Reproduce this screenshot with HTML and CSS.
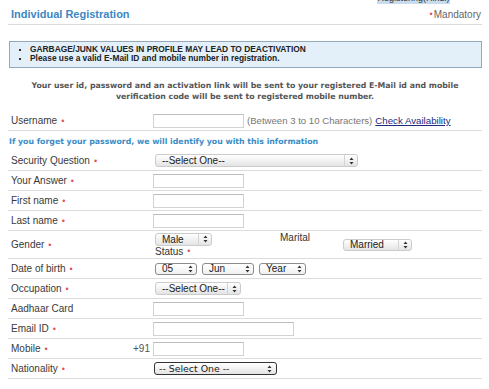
FILE: index.html
```html
<!DOCTYPE html>
<html>
<head>
<meta charset="utf-8">
<link rel="stylesheet" href="styles.css">
</head>
<body>
<div class="page">
  <div class="tabbar"><div class="tab"><span>Registering(Hindi)</span></div></div>
  <div class="head">
    <h1 class="title">Individual Registration</h1>
    <div class="mand"><span class="req">•</span>Mandatory</div>
  </div>
  <div class="notice">
    <ul>
      <li>GARBAGE/JUNK VALUES IN PROFILE MAY LEAD TO DEACTIVATION</li>
      <li>Please use a valid E-Mail ID and mobile number in registration.</li>
    </ul>
  </div>
  <p class="intro">Your user id, password and an activation link will be sent to your registered E-Mail id and mobile<br>verification code will be sent to registered mobile number.</p>

  <div class="form">
    <div class="row">
      <div class="lbl"><span>Username<span class="req">•</span></span></div>
      <input class="txt" type="text">
      <span class="hint">(Between 3 to 10 Characters)</span>
      <a class="check" href="#">Check Availability</a>
    </div>
    <div class="row info">If you forget your password, we will identify you with this information</div>
    <div class="row">
      <div class="lbl"><span>Security Question<span class="req">•</span></span></div>
      <div class="sel w-sec"><span class="val">--Select One--</span><span class="arr"><svg width="5" height="8" viewBox="0 0 5 8"><path d="M2.5 0.5L4.5 3H0.5Z M0.5 5H4.5L2.5 7.5Z" fill="#333"/></svg></span></div>
    </div>
    <div class="row">
      <div class="lbl"><span>Your Answer<span class="req">•</span></span></div>
      <input class="txt" type="text">
    </div>
    <div class="row">
      <div class="lbl"><span>First name<span class="req">•</span></span></div>
      <input class="txt" type="text">
    </div>
    <div class="row">
      <div class="lbl"><span>Last name<span class="req">•</span></span></div>
      <input class="txt" type="text">
    </div>
    <div class="row gender">
      <div class="lbl"><span>Gender<span class="req">•</span></span></div>
      <div class="gcell">
        <div class="gline">
          <div class="sel w-male"><span class="val">Male</span><span class="arr"><svg width="5" height="8" viewBox="0 0 5 8"><path d="M2.5 0.5L4.5 3H0.5Z M0.5 5H4.5L2.5 7.5Z" fill="#333"/></svg></span></div>
          <span class="marital">Marital</span>
        </div>
        <div class="status">Status<span class="req">•</span></div>
      </div>
      <div class="sel w-mar"><span class="val">Married</span><span class="arr"><svg width="5" height="8" viewBox="0 0 5 8"><path d="M2.5 0.5L4.5 3H0.5Z M0.5 5H4.5L2.5 7.5Z" fill="#333"/></svg></span></div>
    </div>
    <div class="row">
      <div class="lbl"><span>Date of birth<span class="req">•</span></span></div>
      <div class="dob">
        <div class="sel dsel w-day"><span class="val">05</span><span class="arr"><svg width="5" height="8" viewBox="0 0 5 8"><path d="M2.5 0.5L4.5 3H0.5Z M0.5 5H4.5L2.5 7.5Z" fill="#333"/></svg></span></div>
        <div class="sel dsel w-mon"><span class="val">Jun</span><span class="arr"><svg width="5" height="8" viewBox="0 0 5 8"><path d="M2.5 0.5L4.5 3H0.5Z M0.5 5H4.5L2.5 7.5Z" fill="#333"/></svg></span></div>
        <div class="sel dsel w-year"><span class="val">Year</span><span class="arr"><svg width="5" height="8" viewBox="0 0 5 8"><path d="M2.5 0.5L4.5 3H0.5Z M0.5 5H4.5L2.5 7.5Z" fill="#333"/></svg></span></div>
      </div>
    </div>
    <div class="row">
      <div class="lbl"><span>Occupation<span class="req">•</span></span></div>
      <div class="sel w-occ"><span class="val">--Select One--</span><span class="arr"><svg width="5" height="8" viewBox="0 0 5 8"><path d="M2.5 0.5L4.5 3H0.5Z M0.5 5H4.5L2.5 7.5Z" fill="#333"/></svg></span></div>
    </div>
    <div class="row">
      <div class="lbl"><span>Aadhaar Card</span></div>
      <input class="txt" type="text">
    </div>
    <div class="row">
      <div class="lbl"><span>Email ID<span class="req">•</span></span></div>
      <input class="txt wide" type="text">
    </div>
    <div class="row">
      <div class="lbl"><span>Mobile<span class="req">•</span></span><span class="cc">+91</span></div>
      <input class="txt" type="text">
    </div>
    <div class="row">
      <div class="lbl"><span>Nationality<span class="req">•</span></span></div>
      <div class="sel nsel"><span class="val">-- Select One --</span><span class="arr"><svg width="5" height="8" viewBox="0 0 5 8"><path d="M2.5 0.5L4.5 3H0.5Z M0.5 5H4.5L2.5 7.5Z" fill="#333"/></svg></span></div>
    </div>
  </div>
</div>
</body>
</html>
```

FILE: styles.css
```css
html, body {
  margin: 0;
  padding: 0;
  background: #fff;
}
body {
  font-family: "Liberation Sans", Arial, sans-serif;
  color: #333;
}
.page {
  width: 474px;
  margin-left: 8px;
}
.tabbar {
  height: 4px;
  display: flex;
}
.tab {
  margin-left: 369px;
  width: 73px;
  height: 4px;
  overflow: hidden;
  background: #c8dcee;
  text-align: center;
  font-size: 9px;
  line-height: 9px;
  color: #333;
}
.tab span {
  display: block;
  margin-top: -6px;
}
.head {
  height: 20px;
  display: flex;
  align-items: center;
  justify-content: space-between;
  border-bottom: 1px solid #dcdcdc;
}
.title {
  margin: 0 0 0 3px;
  font-size: 11px;
  font-weight: bold;
  color: #3d87c3;
}
.mand {
  font-size: 10px;
  color: #666;
  margin-right: 1px;
  display: flex;
  align-items: center;
}
.mand .req {
  margin: 0 1px 0 0;
}
.req {
  color: #e0505a;
  font-size: 9px;
  margin-left: 4px;
  position: relative;
  top: -0.5px;
}
.notice {
  margin: 16px 0 0 1px;
  border: 1px solid #93a9ba;
  background: #e3f0fa;
  padding: 3px 0 4px;
}
.notice ul {
  list-style: none;
  margin: 0;
  padding: 0;
}
.notice li {
  display: flex;
  align-items: center;
  font-size: 8.4px;
  line-height: 9px;
  font-weight: bold;
  color: #222;
}
.notice li::before {
  content: "";
  width: 2px;
  height: 2px;
  background: #333;
  margin: 0 9px 0 9px;
}
.intro {
  margin: 12px 0 9px;
  text-align: center;
  font-family: "DejaVu Sans", Verdana, sans-serif;
  font-weight: bold;
  font-size: 7.8px;
  line-height: 11px;
  color: #555;
}
.row {
  display: flex;
  align-items: center;
  height: 19px;
  border-bottom: 1px solid #dcdcdc;
  font-size: 10px;
}
.row.info {
  height: 20px;
  border-bottom: none;
  padding-left: 1px;
  font-family: "DejaVu Sans", Verdana, sans-serif;
  font-weight: bold;
  font-size: 7.8px;
  color: #3a8cc6;
}
.row.gender {
  height: 27px;
}
.lbl {
  width: 145px;
  flex: none;
  box-sizing: border-box;
  padding: 0 3px 0 3px;
  display: flex;
  justify-content: space-between;
  align-items: center;
  color: #3a3a3a;
}
.cc {
  color: #555;
}
.txt {
  width: 91px;
  height: 14px;
  box-sizing: border-box;
  border: 1px solid #d2d2d2;
  border-top-color: #bdbdbd;
  background: #fff;
  padding: 0;
  margin: 0;
  font-size: 10px;
}
.txt.wide {
  width: 141px;
}
.hint {
  margin-left: 3px;
  color: #777;
  font-size: 9.6px;
}
.check {
  margin-left: 3px;
  color: #1c2a80;
  text-decoration: underline;
  font-size: 9.7px;
}
.sel {
  display: flex;
  align-items: center;
  height: 13px;
  box-sizing: border-box;
  border: 1px solid #cbcbcb;
  border-radius: 3px;
  background: linear-gradient(#ffffff, #e4e4e4);
  font-size: 10px;
  color: #222;
  margin-left: 2px;
}
.sel .val {
  flex: 1;
  padding-left: 6px;
  white-space: nowrap;
  line-height: 11px;
}
.sel .arr {
  width: 13px;
  height: 100%;
  box-sizing: border-box;
  border-left: 1px solid #d4d4d4;
  display: flex;
  align-items: center;
  justify-content: center;
}
.w-sec { width: 203px; }
.w-male { width: 57px; }
.w-occ { width: 86px; }
.w-mar {
  width: 69px;
  height: 12px;
  margin-left: 30px;
}
.gcell {
  width: 160px;
  display: flex;
  flex-direction: column;
}
.gline {
  display: flex;
  align-items: flex-start;
  justify-content: space-between;
  height: 14px;
  padding-right: 3px;
}
.gline .sel {
  margin-top: 1px;
}
.marital {
  line-height: 12px;
  margin-top: 0;
}
.status {
  margin-left: 2px;
  line-height: 11px;
}
.dob {
  display: flex;
  gap: 5px;
  margin-left: 2px;
}
.dob .sel {
  margin-left: 0;
}
.dsel {
  height: 12px;
  border-color: #8c8c8c;
  background: linear-gradient(#ffffff, #f0f0f0);
}
.dsel .arr {
  border-left: none;
  width: 11px;
}
.w-day { width: 42px; }
.w-mon { width: 52px; }
.w-year { width: 47px; }
.nsel {
  width: 123px;
  margin-left: 1px;
  border-color: #333;
  font-family: "DejaVu Sans", Verdana, sans-serif;
  font-size: 9.4px;
}
.nsel .val {
  padding-left: 4px;
}
.nsel .arr {
  border-left: none;
  width: 14px;
}
```
